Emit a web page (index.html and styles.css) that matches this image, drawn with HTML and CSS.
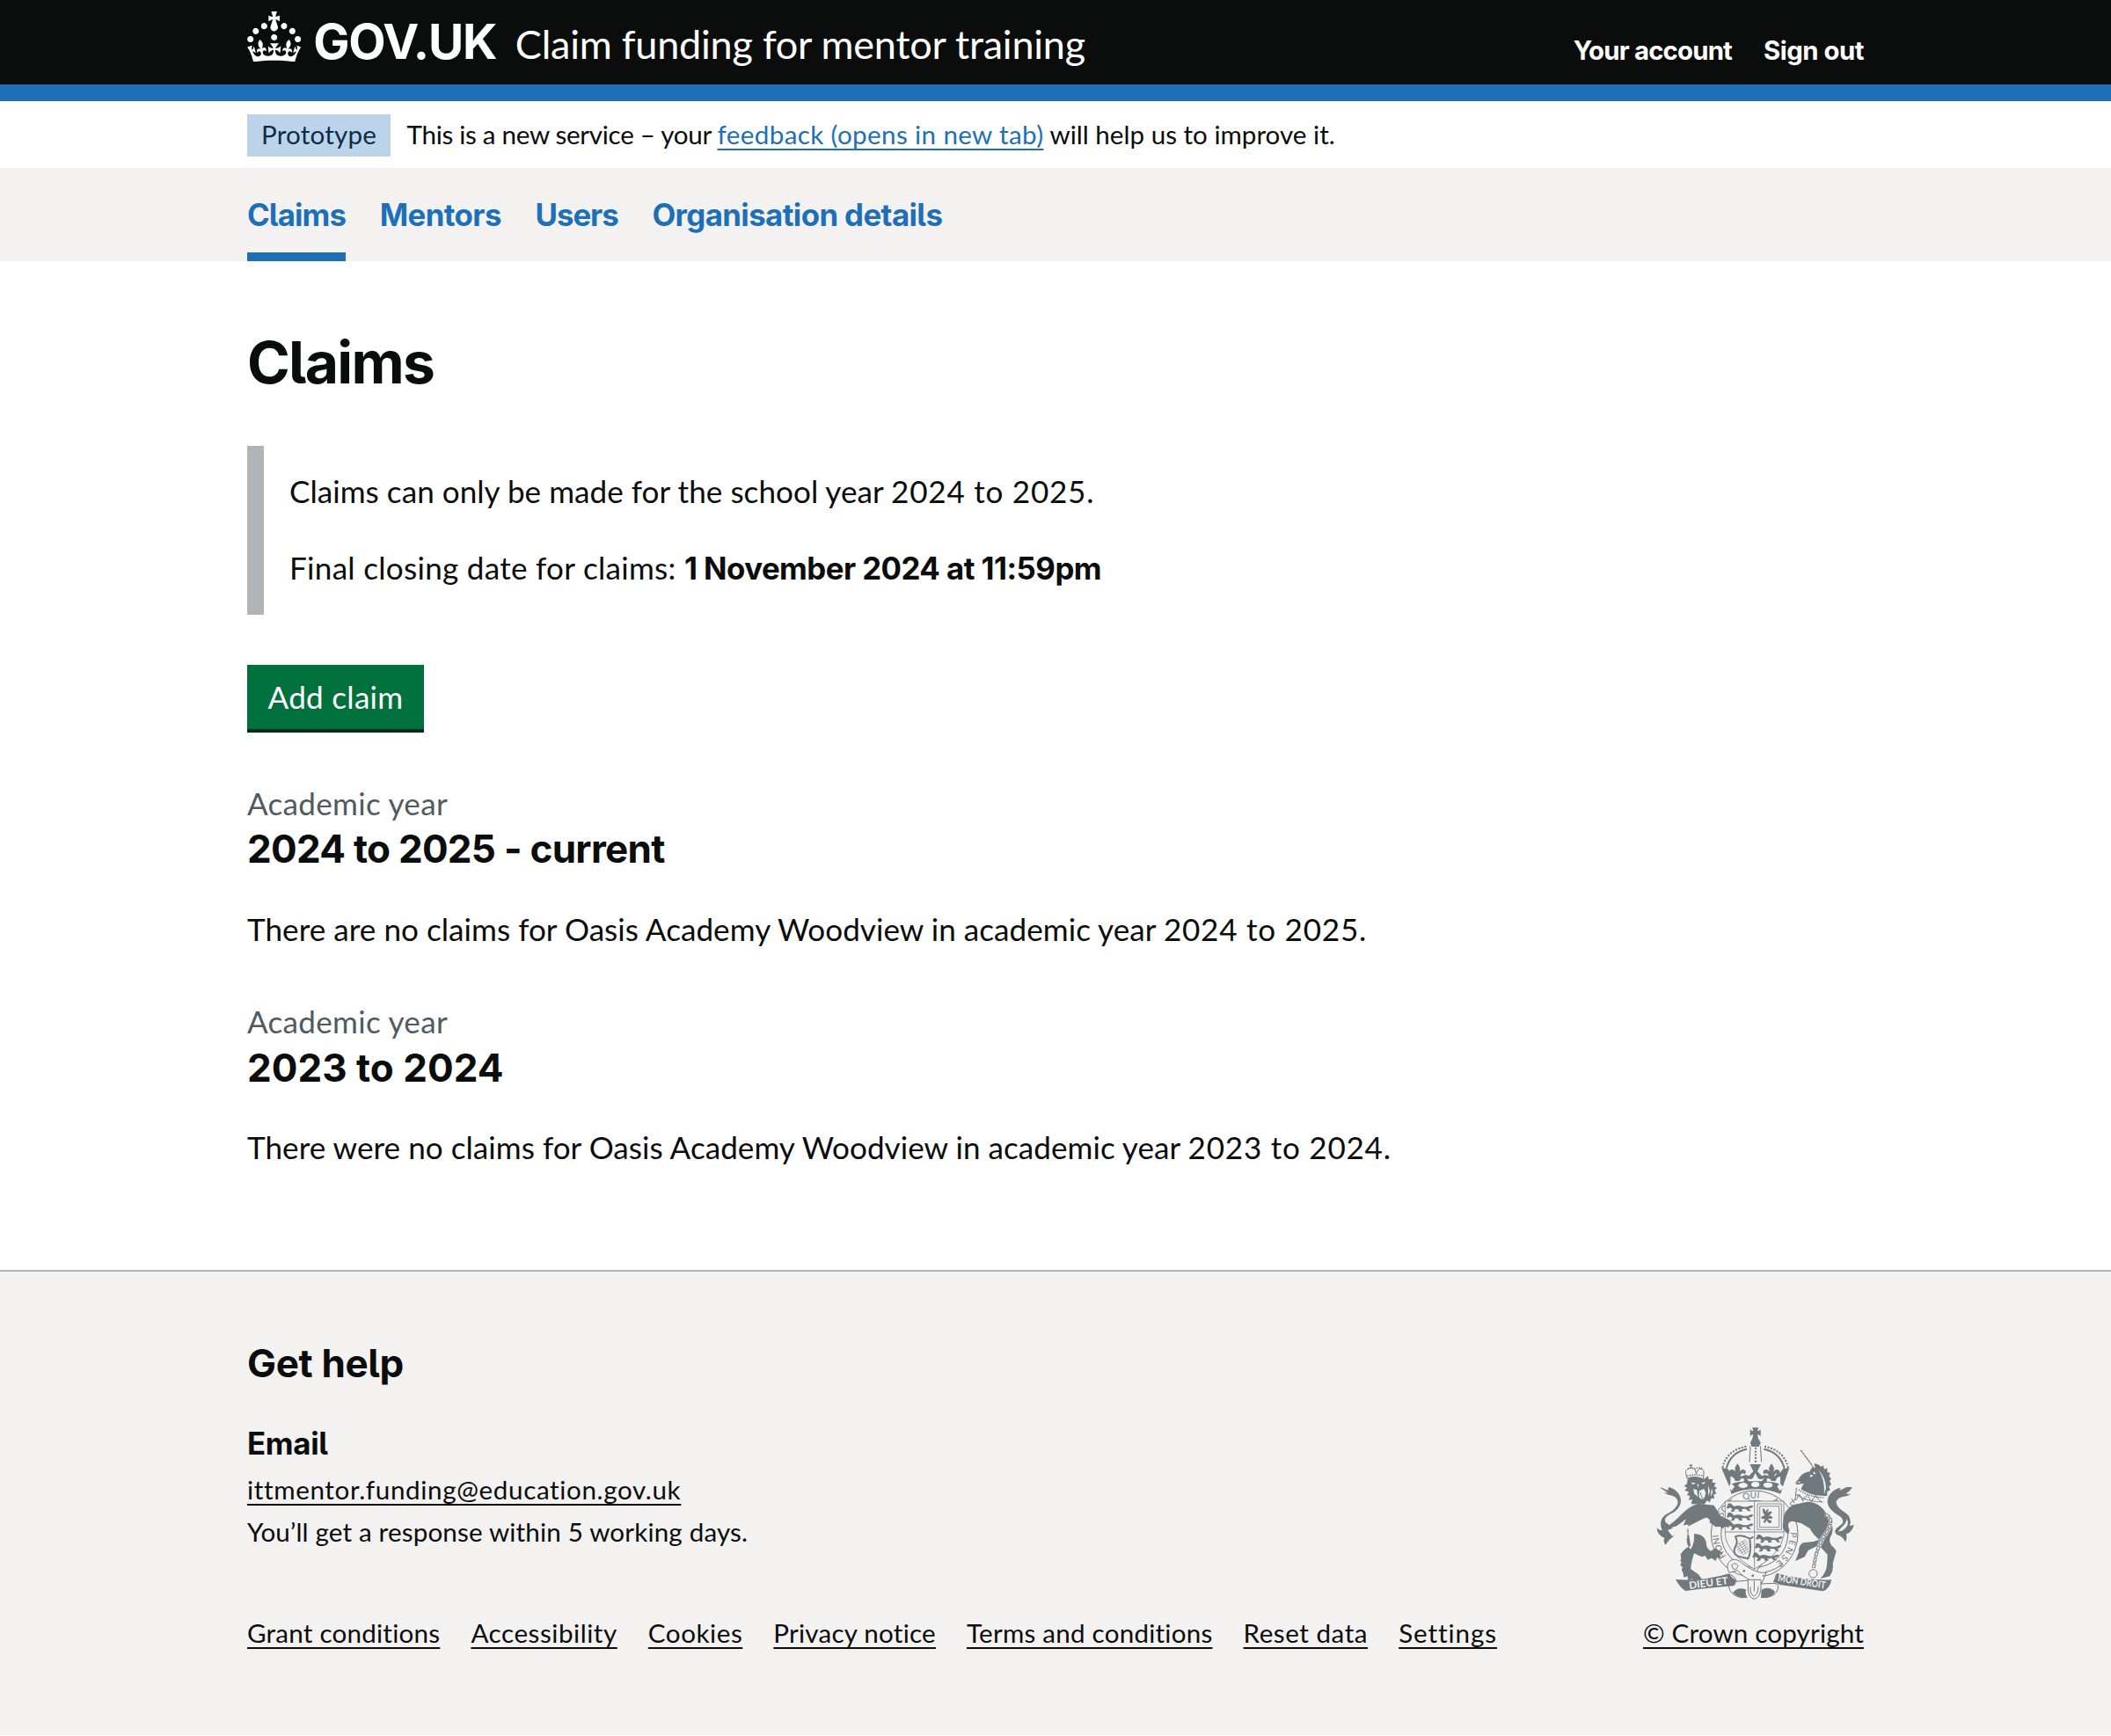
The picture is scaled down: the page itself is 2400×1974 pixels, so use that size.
FILE: index.html
```html
<!DOCTYPE html>
<html lang="en">
<head>
<meta charset="utf-8">
<title>Claims - Claim funding for mentor training - GOV.UK</title>
<link rel="stylesheet" href="styles.css">
</head>
<body>
<header class="header">
  <div class="container header-row">
    <a class="logo" href="#">
      <svg class="crown" viewBox="0 0 32 30" aria-hidden="true"><path d="M22.6 10.4c-1 .4-2-.1-2.4-1-.4-.9.1-2 1-2.4.9-.4 2 .1 2.4 1s-.1 2-1 2.4m-5.9 6.7c-.9.4-2-.1-2.4-1-.4-.9.1-2 1-2.4.9-.4 2 .1 2.4 1s-.1 2-1 2.4m10.8-3.7c-1 .4-2-.1-2.4-1-.4-.9.1-2 1-2.4.9-.4 2 .1 2.4 1s0 2-1 2.4m3.3 4.8c-1 .4-2-.1-2.4-1-.4-.9.1-2 1-2.4.9-.4 2 .1 2.4 1s-.1 2-1 2.4M17 4.7l2.3 1.2V2.5l-2.3.7-.2-.2.9-3h-3.4l.9 3-.2.2c-.1.1-2.3-.7-2.3-.7v3.4L15 4.7c.1.1.1.2.2.2l-1.3 4c-.1.2-.1.4-.1.6 0 1.1.8 2 1.9 2.2h.7c1-.2 1.9-1.1 1.9-2.1 0-.2 0-.4-.1-.6l-1.3-4c-.1-.2 0-.2.1-.3m-7.6 5.7c.9.4 2-.1 2.4-1 .4-.9-.1-2-1-2.4-.9-.4-2 .1-2.4 1s0 2 1 2.4m-5 3c.9.4 2-.1 2.4-1 .4-.9-.1-2-1-2.4-.9-.4-2 .1-2.4 1s.1 2 1 2.4m-3.2 4.8c.9.4 2-.1 2.4-1 .4-.9-.1-2-1-2.4-.9-.4-2 .1-2.4 1s0 2 1 2.4m14.8 11c4.4 0 8.6.3 12.3.8 1.1-4.5 2.4-7 3.7-8.8l-2.5-.9c.2 1.3.3 1.9 0 2.7-.4-.4-.8-1.1-1.1-2.3l-1.2 4c.7-.5 1.3-.8 2-.9-1.1 2.5-2.6 3.1-3.5 3-1.1-.2-1.7-1.2-1.5-2.1.3-1.2 1.5-1.5 2.1-.1 1.1-2.3-.8-3-2-2.3 1.9-1.9 2.1-3.5.6-5.6-2.1 1.6-2.1 3.2-1.2 5.5-1.2-1.4-3.2-.6-2.5 1.6.9-1.4 2.1-.5 1.9.8-.2 1.1-1.7 2.1-3.5 1.9-2.7-.2-2.9-2.1-2.9-3.6.7-.1 1.9.5 2.9 1.9l.4-4.3c-1.1 1.1-2.1 1.4-3.2 1.4.4-1.2 2.1-3 2.1-3h-5.4s1.7 1.9 2.1 3c-1.1 0-2.1-.2-3.2-1.4l.4 4.3c1-1.4 2.2-2 2.9-1.9-.1 1.5-.2 3.4-2.9 3.6-1.9.2-3.4-.8-3.5-1.9-.2-1.3 1-2.2 1.9-.8.7-2.3-1.2-3-2.5-1.6.9-2.2.9-3.9-1.2-5.5-1.5 2-1.3 3.7.6 5.6-1.2-.7-3.1 0-2 2.3.6-1.4 1.8-1.1 2.1.1.2.9-.3 1.9-1.5 2.1-.9.2-2.4-.5-3.5-3 .6 0 1.2.3 2 .9l-1.2-4c-.3 1.1-.7 1.9-1.1 2.3-.3-.8-.2-1.4 0-2.7l-2.9.9C1.3 23 2.6 25.5 3.7 30c3.7-.5 7.9-.8 12.3-.8"/></svg>
      <span class="wordmark">GOV.UK</span>
    </a>
    <a class="service" href="#">Claim funding for mentor training</a>
    <nav class="account">
      <a href="#">Your account</a>
      <a href="#">Sign out</a>
    </nav>
  </div>
</header>
<div class="container phase">
  <strong class="tag">Prototype</strong>
  <p class="phase-text"><span class="phase-start">This is a new service – your </span><a href="#">feedback (opens in new tab)</a> will help us to improve it.</p>
</div>
<nav class="primary">
  <div class="container primary-row">
    <a class="current" href="#">Claims</a>
    <a href="#">Mentors</a>
    <a class="users" href="#">Users</a>
    <a href="#">Organisation details</a>
  </div>
</nav>
<main class="container main">
  <h1>Claims</h1>
  <div class="inset">
    <p>Claims can only be made for the school year <span class="years">2024 to 2025.</span></p>
    <p><span class="closing">Final closing date for claims: </span><strong>1 November 2024 at 11:59pm</strong></p>
  </div>
  <a class="button" href="#">Add claim</a>
  <section class="year">
    <span class="caption">Academic year</span>
    <h2 class="tight">2024 to 2025 - current</h2>
    <p>There are no claims for Oasis Academy Woodview in academic year <span class="years">2024 to 2025.</span></p>
  </section>
  <section class="year">
    <span class="caption">Academic year</span>
    <h2>2023 to 2024</h2>
    <p>There were no claims for Oasis Academy Woodview in academic year <span class="years">2023 to 2024.</span></p>
  </section>
</main>
<footer class="footer">
  <div class="container footer-row">
    <div class="footer-main">
      <h2>Get help</h2>
      <h3>Email</h3>
      <p><a class="email" href="#">ittmentor.funding@education.gov.uk</a></p>
      <p>You’ll get a response within 5 working days.</p>
      <div class="links">
        <a href="#">Grant conditions</a>
        <a class="wide" href="#">Accessibility</a>
        <a class="wide" href="#">Cookies</a>
        <a href="#">Privacy notice</a>
        <a href="#">Terms and conditions</a>
        <a class="wide" href="#">Reset data</a>
        <a class="wider" href="#">Settings</a>
      </div>
    </div>
    <div class="copyright">
      <svg class="crest" viewBox="24 40 752 600" aria-hidden="true">
        <defs>
          <path id="garter" d="M308 485A122 122 0 1 1 500 485A122 122 0 0 1 404 532"/>
          <g id="walker"><path d="M0 4q8-6 14 0l6 6q14-6 28 0q14 4 26-2q8-5 12 2q-6 8-16 6l8 10h-10l-8-8-14 1 3 8h-12l-2-7-10-1-6 9h-10l5-9-8-6-6 5-6-6 5-4z"/><circle cx="5" cy="6" r="7"/></g>
          <path id="fleur" d="M0-26q12 13 7 27q10-12 20-3q4 8-3 12q-5-7-12 0l-4 14h-16l-4-14q-7-7-12 0q-7-4-3-12q10-9 20 3q-5-14 7-27z"/>
        </defs>
        <!-- garter -->
        <circle class="line" cx="404" cy="410" r="148"/>
        <circle class="line" cx="404" cy="410" r="114"/>
        <text class="motto"><textPath href="#garter" startOffset="0">HONI</textPath></text>
        <text class="motto"><textPath href="#garter" startOffset="138">SOIT</textPath></text>
        <text class="motto"><textPath href="#garter" startOffset="234">QUI</textPath></text>
        <text class="motto"><textPath href="#garter" startOffset="332">A</textPath></text>
        <text class="motto pense"><textPath href="#garter" startOffset="458">PENSE</textPath></text>
        <!-- shield -->
        <path class="shield plate" d="M304 298h200v116q-8 62-100 116q-92-54-100-116zM404 298v232M304 403h200"/>
        <use href="#walker" x="314" y="306"/><use href="#walker" x="314" y="337"/><use href="#walker" x="314" y="368"/>
        <use href="#walker" x="414" y="412"/><use href="#walker" x="410" y="442"/><use href="#walker" x="402" y="474"/>
        <path class="shield" d="M414 307h82v88h-82zM422 315h66v72h-66z"/>
        <path d="M432 322q8 2 10 12q4-10 10-10q0 8-4 14q10-8 16-4q-4 10-12 14q12-2 14 8q-8 4-16 0q2 8 12 8q2 8-6 10q-8-2-10-12q-4 12-12 10q2-8 6-14q-10 2-14-4q6-8 14-8q-10-8-8-24z"/>
        <path class="line5" d="M336 420q24-10 48 4q14 2 14-6M340 422q8 14 0 28q-14 26 8 36l34 8q12-20 6-66"/>
        <path class="strings" d="M344 446l30-16M342 456l38-22M342 466l40-24M348 472l36-22M356 476l28-18M364 482l20-14M352 440l22 36M362 434l18 34M346 450l18 28"/>
        <!-- royal crown -->
        <path d="M396 47h22l-4 11q6 2 11-5v24q-5-7-11-6l4 17h-22l4-17q-6-1-11 6v-24q5 7 11 5z"/>
        <path d="M390 100q2-16 17-16t18 16l-6 12h-24z"/>
        <path class="beads" d="M296 181Q310 122 382 110M518 181Q504 122 432 110"/>
        <path class="line5" d="M308 186Q322 132 378 120M506 186Q492 132 436 120"/>
        <path class="line" d="M390 110l-3 55M424 110l4 55"/>
        <path class="beads" d="M408 118v50"/>
        <path d="M291 184l22 4 10 14q5-6 10 0l8 12q8-6 16 0l16-6 12 4 15-16-12-24h38l-12 24 15 16 12-4 16 6q8-6 16 0l8-12q5-6 10 0l10-14 22-4-26 75-4 14q-85-32-168 0l-6-24z"/>
        <use href="#fleur" x="346" y="196"/><use href="#fleur" x="462" y="196"/>
        <path class="cut" d="M322 214q12 0 16 15l14 0q6-12 16-8l0 10q-28 0-46 10zM492 214q-12 0-16 15l-14 0q-6-12-16-8l0 10q28 0 46 10zM378 220q12 6 20 0l9-18 9 18q8 6 20 0l-6 10h-46z"/>
        <path class="cut" d="M324 237l12 11-9 14-12-11zM491 237l12 13-12 13-10-15z"/>
        <ellipse class="cut" cx="365" cy="244" rx="16" ry="9"/><ellipse class="cut" cx="407" cy="241" rx="14" ry="9"/><ellipse class="cut" cx="450" cy="243" rx="16" ry="9"/>
        <!-- lion -->
        <path d="M80 250q22 7 29 12q-1-10 4-12q38 12 40 48q-2 28-34 43q-25 12-19 28l24 19q16 14 4 30q-16 10-28 29q-8-12-3-24q-26-10-26-36q6 10 18 10q-14-34 13-54q32-14 40-36q4-18-16-27q-14-2-34-11q11 2 16-1q-12-6-28-18z"/>
        <path d="M96 391q36-22 58-47q26-28 58-38l54 6 22 36 34 16 0 12-6 12-12-4-10 8-8-8-14 2-22-16q-10-6-24 2l-52 22q4 16-1 34q-1 20 13 34q16-22 11-60q36 10 42 34q0 24 16 32l16-10 25 18-10 4 4 14-14-4-4 12-14-10-14 6-8-14-12 4-26-12-6 20q-6 24-5 34l26 18 14 20-10-2-2 12-10-14-4 12-10-14-12 8-4-16-12 4-2-14-6-12 4-8-8-8 4-10-5-6 4-4-2-17q14-22 34-28l-7-50q-5-26 3-24z"/>
        <path class="cut" d="M108 397q33-12 62-38q-8 26-24 44l-22 15z"/>
        <path class="cut" d="M174 386l56-29q16-8 22 8q-10 28-4 62l-8 4q-14-24-50-22l-13 3q8-18-3-26z"/>
        <path d="M176 222q24-14 56 0l14-10 2 12 14-2-2 12 12 2-6 10 10 8-8 6 6 12-10 4 4 12-12 0-4 14-10-6-10 14-10-4-20 2-14 0 4-16-12 2 4-14-10-2 6-12-14-4 8-10-10-6 10-8z"/>
        <path class="cut" d="M188 234l16 2-10 6zM222 236l16-4-8 8zM208 240h6l-2 12zM196 256l12 4 2 22-12-10zM216 262l16-6 6 14-6 20q-12 4-18-8zM246 244l6 20-6 16zM258 254l4 14-8 14z"/>
        <path class="line" d="M220 268q2 20 11 22q10-2 9-20"/>
        <path class="crownlet" d="M174 220l-4-16q-4-16 17-20q17 2 18 20q6-19 20-16q9 6 6 18l-2 18q-28-14-55-4zM187 171v14M181 176h12"/>
        <path class="beads3" d="M174 212q28-8 56 0M176 190q12-12 26-2q14-8 26 0"/>
        <!-- unicorn -->
        <path class="horn" d="M562 124l40 54"/>
        <path d="M589 201l14-22 8 8-3-18q14 2 24 12l6-6 4 14 10-4v14l10 2-4 12 8 8-6 8 6 12-8 6 4 14-10 4v14l-10 2-8 20q-44-4-80-28l18-36-24 5-3-6-3-2 12-10q10-24 39-27z"/>
        <path class="cut" d="M622 190q24 28 26 62l-6 22q2-50-20-84zM592 208l13 2-9 7zM541 232l20-1-2 4zM606 196l8 10-10-2z"/>
        <path class="fillbg" d="M553 250q36 30 92 30l-4 30q-44 6-95-12z"/>
        <path class="beads3" d="M554 258q36 26 86 28M548 276q40 26 92 24M545 294l12-20 12 22 15-20 14 22 14-18 18 20"/>
        <path class="line" d="M547 252l-4 40-16 12q-4 8 8 8M530 288l10 16"/>
        <path d="M738 250q-6 12-22 22q12 4 18 0q-10 10-30 11q-26 8-20 25q6 16 28 28q26 16 17 47l14-5q-4 24-26 32q4 16-3 28q-8-20-24-24q-20-8-6-24q14-10 20-16q8-16-18-30q-46-30-28-64q14-24 40-28q-2 8-4 10q12-6 24-12z"/>
        <path class="cut" d="M700 388q17-14 19-30q12 24-14 40l-16 4z"/>
        <path d="M504 348q8-26 34-38l46-10q50 0 72 56q26 34 6 66q-6 22 14 36l7 10-12 42q4 22-10 44l-32 8q20-22 22-46q2-22 2-36l-22-24-8-8-36 18-12 22-32 14 12-30q-2-22 14-32l36-4 20-7q-22-17-32-38l-30-18-30-7q-18 2-13 22q6 8 0 22q-13-4-20-24z"/>
        <path class="chainback" d="M644 342q22 8 20 30q-6 26-24 46q-28 50-34 108"/>
        <path class="chain" d="M644 342q22 8 20 30q-6 26-24 46q-28 50-34 108"/>
        <path class="chainhole" d="M644 342q22 8 20 30q-6 26-24 46q-28 50-34 108"/>
        <circle class="line" cx="604" cy="545" r="14"/>
        <!-- buckle and belt -->
        <path class="strap" d="M320 502q20-14 42 8q48 36 82 32l-14 34q-48 0-84-42l-28 8q-14-26 2-40z"/>
        <path class="line" d="M326 516q12-12 22 2q-2 14-16 12zM410 538l20-26M440 540q40-8 60-30"/>
        <circle cx="368" cy="536" r="4"/><circle cx="398" cy="552" r="4"/><circle cx="434" cy="552" r="3"/>
        <!-- scroll -->
        <path d="M135 565q100 6 182-20q10 16 24 22q0 14-8 20q-70 5-164 17q-20-12-34-39zM479 543q90 26 188 23q-8 34-30 39q-76-12-146-22l-24-12q12-6 12-28z"/>
        <path class="line" d="M318 548q20 4 24 24q-24 2-26 18q8 34 50 38M478 548q-8 26-8 30q20 2 14 18q-6 30-50 30M340 572l42-4M426 580l44-2"/>
        <path d="M330 610q18-22 46-10q-6 10 4 28q-34 0-50-18zM428 600q24-14 46 6q-6 24-48 22z"/>
        <path class="strap" d="M382 566h44v32q-4 30-23 34q-20-6-21-34z"/>
        <path class="line" d="M390 590q-2 26 13 32q14-8 14-32M403 570v36"/>
        <text class="scroll" transform="translate(182 597) rotate(-7)" textLength="134" lengthAdjust="spacingAndGlyphs">DIEU ET</text>
        <text class="scroll" transform="translate(482 571) rotate(9)" textLength="164" lengthAdjust="spacingAndGlyphs">MON DROIT</text>
      </svg>
      <a href="#">© Crown copyright</a>
    </div>
  </div>
</footer>
</body>
</html>
```
FILE: styles.css
```css
* { box-sizing: border-box; }
body { margin: 0; background: #fff; color: #0b0c0c; font: 400 35.1px/48px Lato, "Liberation Sans", sans-serif; }
h1, h2, h3, p { margin: 0; }
h1, h2, h3, strong, .wordmark, .account, .primary { font-family: Inter, "Liberation Sans", sans-serif; font-weight: 700; font-feature-settings: "cv05" 1; }
a { color: inherit; text-decoration: none; }
p, span, a { white-space: pre; }
.container { width: 1838px; margin: 0 auto; }

.header { height: 115px; background: #0b0c0c; border-bottom: 19px solid #1d70b8; color: #fff; }
.header-row { display: flex; }
.logo { display: flex; }
.crown { width: 61.3px; height: 57.4px; margin-top: 13px; fill: #fff; }
.wordmark { width: 208px; margin: 7px 0 0 14px; font-size: 55px; line-height: 80px; letter-spacing: -1.24px; }
.service { margin: 20px 0 0 21.5px; font-size: 45px; line-height: 60px; letter-spacing: -.23px; }
.account { display: flex; gap: 36px; margin: 34px 0 0 auto; font-size: 29.3px; line-height: 48px; letter-spacing: -.8px; }
.account a + a { letter-spacing: -.47px; }

.phase { display: flex; height: 76px; padding-top: 15px; font-size: 29.6px; line-height: 46px; }
.tag { width: 163px; height: 48px; padding-left: 16px; background: #bbd4ea; color: #0c2d4a; font: 400 29.6px/46px Lato, sans-serif; letter-spacing: .19px; }
.phase-text { margin-left: 18.5px; }
.phase-start { letter-spacing: -.3px; }
.phase-text a { color: #1d70b8; letter-spacing: .37px; }
.phase-text a, .footer a { text-decoration: underline; text-decoration-thickness: 2px; text-underline-offset: 5px; }

.primary { height: 106px; background: #f3f2f1; color: #1d70b8; font-size: 34.8px; line-height: 106px; letter-spacing: -.6px; }
.primary-row { display: flex; gap: 38.8px; }
.current { box-shadow: inset 0 -10px #1d70b8; letter-spacing: -.9px; }
.users { letter-spacing: -1.07px; }

.main { padding: 67px 0 116px; letter-spacing: .04px; }
h1 { font-size: 66px; line-height: 96px; letter-spacing: -1.75px; }
.inset { height: 192px; margin-top: 47px; padding: 27px 0 0 29px; border-left: 19px solid #b1b4b6; }
.inset p + p { margin-top: 39px; }
.inset strong { font-size: 34.8px; letter-spacing: -.54px; }
.closing { letter-spacing: .29px; }
.years { letter-spacing: .75px; }
.button { display: block; width: 201px; height: 73px; margin-top: 57px; padding-left: 23.5px; background: #00703c; box-shadow: 0 4px #002d18; color: #fff; line-height: 73px; letter-spacing: .29px; }
.year { margin-top: 57.6px; }
.button + .year { margin-top: 60px; }
.caption { display: inline-block; vertical-align: top; color: #505a5f; letter-spacing: .3px; }
h2 { font-size: 44px; line-height: 56px; }
.year h2 { margin: .4px 0 38.4px; }
.tight { letter-spacing: -.72px; }

.footer { height: 528.5px; background: #f3f2f1; border-top: 2px solid #b1b4b6; font-size: 29.6px; letter-spacing: .16px; }
.footer-row { display: flex; justify-content: space-between; align-items: flex-end; padding-top: 76px; }
.footer h2 { letter-spacing: -.34px; }
h3 { margin: 39px 0 5px; font-size: 34.8px; line-height: 48px; letter-spacing: -.3px; }
.email { letter-spacing: .63px; }
.links { display: flex; gap: 35.1px; margin-top: 67px; letter-spacing: .22px; }
.wide { letter-spacing: .54px; }
.wider { letter-spacing: .91px; }
.copyright { display: flex; flex-direction: column; align-items: flex-end; }
.crest { width: 250.7px; height: 200px; margin-bottom: 12px; fill: #70797e; letter-spacing: 0; }
.crest .line, .crest .line5, .crest .shield, .crest .strings, .crest .beads, .crest .beads3, .crest .chain, .crest .horn, .crest .crownlet { fill: none; stroke: #70797e; stroke-width: 3; }
.crest .line5 { stroke-width: 6; }
.crest .horn { stroke-width: 4; stroke-dasharray: 9 1.5; }
.crest .shield { stroke-width: 2.4; }
.crest .plate { fill: #f3f2f1; }
.crest .strings { stroke-width: 1.8; }
.crest .beads { stroke-width: 7; stroke-linecap: round; stroke-dasharray: 0 11; }
.crest .beads3 { stroke-width: 4; stroke-dasharray: 5 3; }
.crest .chainback { fill: none; stroke: #f3f2f1; stroke-width: 14; }
.crest .chain { stroke-width: 11; stroke-dasharray: 18 3; }
.crest .chainhole { fill: none; stroke: #f3f2f1; stroke-width: 5; stroke-dasharray: 11 10; stroke-dashoffset: -3.5; }
.crest .cut, .crest .fillbg { fill: #f3f2f1; }
.crest .strap { fill: #f3f2f1; stroke: #70797e; stroke-width: 3; }
.crest .motto { font: 400 30px Lato, sans-serif; }
.crest .pense { letter-spacing: 7px; }
.crest .scroll { fill: #f3f2f1; font: 700 34px Lato, sans-serif; }
```
